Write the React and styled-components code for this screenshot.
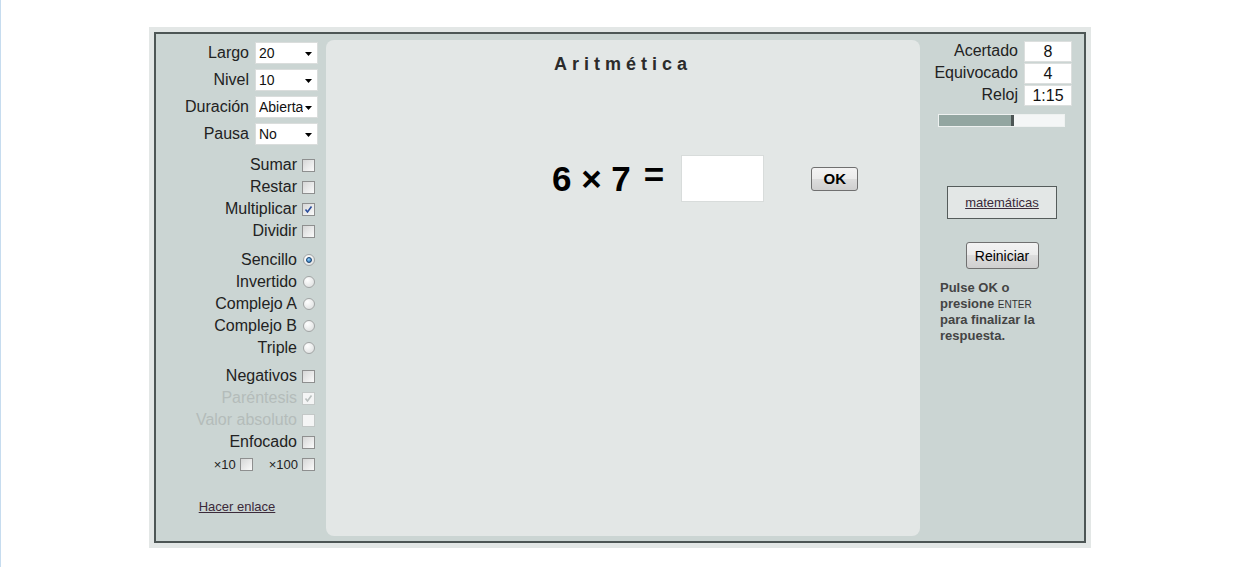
import React from "react";
import styled, { createGlobalStyle } from "styled-components";

const GlobalStyle = createGlobalStyle`
  body {
    margin: 0;
    background: #fff;
    font-family: "Liberation Sans", Arial, sans-serif;
  }
`;

const Page = styled.div`
  min-height: 567px;
  box-sizing: border-box;
  border-left: 1px solid #c6dcef;
  padding: 27px 0 0 148px;
`;

const Frame = styled.div`
  width: 942px;
  box-sizing: border-box;
  padding: 5px;
  background: #e3e7e6;
`;

const Board = styled.div`
  display: flex;
  height: 511px;
  box-sizing: border-box;
  border: 2px solid #4d5655;
  background: #cbd5d3;
`;

/* left column */

const LeftCol = styled.div`
  width: 170px;
  flex-shrink: 0;
  box-sizing: border-box;
  padding: 8px 8px 0 0;
  display: flex;
  flex-direction: column;
  align-items: flex-end;
`;

const SelectRow = styled.div`
  display: flex;
  align-items: center;
  gap: 6px;
  height: 22px;
  margin-bottom: ${(p) => (p.$last ? 0 : 5)}px;
  font-size: 16px;
  color: #222;
`;

const FakeSelect = styled.div`
  width: 63px;
  height: 22px;
  box-sizing: border-box;
  display: flex;
  align-items: center;
  background: #fff;
  border: 1px solid #dadddc;
  padding-left: 3px;
  font-size: 14px;
  color: #111;
`;

const SelectText = styled.span`
  flex: 1;
  overflow: hidden;
  white-space: nowrap;
`;

const Arrow = styled.svg`
  width: 7px;
  height: 4px;
  margin: 1px 5px 0 2px;
  flex-shrink: 0;
`;

const Group = styled.div`
  display: flex;
  flex-direction: column;
  align-items: flex-end;
  margin-top: ${(p) => p.$top}px;
  padding-right: 3px;
`;

const OptRow = styled.label`
  display: flex;
  align-items: center;
  gap: ${(p) => (p.$radio ? 6 : 5)}px;
  height: 22px;
  font-size: 16px;
  color: ${(p) => (p.$disabled ? "#b4bcba" : "#222")};
`;

const MultRow = styled.div`
  display: flex;
  align-items: center;
  height: 22px;
  gap: 16px;
`;

const SmallOpt = styled.span`
  display: flex;
  align-items: center;
  gap: 4px;
  font-size: 13px;
  color: #222;
`;

const Box = styled.span`
  width: 13px;
  height: 13px;
  box-sizing: border-box;
  display: inline-flex;
  align-items: center;
  justify-content: center;
  border: 1px solid ${(p) => (p.$disabled ? "#c3c8c7" : "#8e8f8f")};
  background: ${(p) =>
    p.$disabled ? "#f4f5f5" : "linear-gradient(135deg, #d6d7d7, #fafafa)"};
`;

const RadioRing = styled.span`
  width: 12px;
  height: 12px;
  box-sizing: border-box;
  border-radius: 50%;
  display: inline-flex;
  align-items: center;
  justify-content: center;
  border: 1px solid #a2a5a5;
  background: radial-gradient(circle at 35% 30%, #ffffff, #d9dbdb);
`;

const RadioDot = styled.span`
  width: 6px;
  height: 6px;
  border-radius: 50%;
  box-sizing: border-box;
  border: 1px solid #16406c;
  background: radial-gradient(circle at 40% 35%, #8fd0ff, #1f66a8);
`;

const LinkText = styled.a`
  font-size: 13px;
  color: #3b2a3a;
  text-decoration: underline;
  cursor: pointer;
`;

const BottomLink = styled.div`
  align-self: center;
  margin-top: 22px;
`;

/* center panel */

const Center = styled.div`
  width: 594px;
  flex-shrink: 0;
  margin: 6px 0 5px;
  border-radius: 8px;
  background: #e3e7e6;
  padding-top: 14px;
  box-sizing: border-box;
`;

const Title = styled.h1`
  margin: 0;
  text-align: center;
  font-size: 18px;
  font-weight: bold;
  letter-spacing: 5px;
  color: #2b2b2b;
  line-height: 21px;
`;

const Equation = styled.div`
  display: flex;
  align-items: center;
  margin-top: 80px;
  padding-left: 226px;
`;

const Expr = styled.span`
  font-size: 35px;
  font-weight: bold;
  color: #000;
  white-space: pre;
`;

const Equals = styled.span`
  font-size: 35px;
  font-weight: bold;
  color: #000;
  margin-left: 13px;
  position: relative;
  top: -4px;
`;

const AnswerBox = styled.div`
  width: 83px;
  height: 47px;
  box-sizing: border-box;
  margin-left: 17px;
  background: #fff;
  border: 1px solid #d8dcdb;
`;

const Button = styled.button`
  width: ${(p) => p.$w}px;
  height: ${(p) => p.$h}px;
  padding: 0;
  box-sizing: border-box;
  border: 1px solid #707070;
  border-radius: 3px;
  background: linear-gradient(#f3f3f3, #ebebeb 50%, #dddddd 50%, #cfcfcf);
  font-family: "Liberation Sans", Arial, sans-serif;
  font-size: ${(p) => (p.$bold ? 15 : 14)}px;
  font-weight: ${(p) => (p.$bold ? "bold" : "normal")};
  color: #000;
`;

const OkSlot = styled.div`
  margin-left: 47px;
  display: flex;
`;

/* right column */

const RightCol = styled.div`
  flex: 1;
  box-sizing: border-box;
  padding-top: 6px;
  display: flex;
  flex-direction: column;
`;

const StatRow = styled.div`
  display: flex;
  justify-content: flex-end;
  align-items: center;
  gap: 6px;
  height: 22px;
  padding-right: 12px;
  font-size: 16px;
  color: #222;
`;

const StatValue = styled.div`
  width: 48px;
  height: 21px;
  box-sizing: border-box;
  background: #fff;
  border: 1px solid #dcdfde;
  text-align: center;
  line-height: 19px;
  color: #111;
`;

const Progress = styled.div`
  width: 127px;
  height: 13px;
  box-sizing: border-box;
  margin: 8px 0 0 18px;
  border: 1px solid #eef1f0;
  background: #f4f6f6;
  display: flex;
`;

const ProgressFill = styled.div`
  height: 100%;
  box-sizing: border-box;
  background: #93a6a1;
  border-right: 3px solid #4d5655;
`;

const LinkBox = styled.div`
  align-self: center;
  margin-top: 59px;
  width: 110px;
  height: 33px;
  box-sizing: border-box;
  border: 1px solid #555c5b;
  background: #e3e7e6;
  display: flex;
  align-items: center;
  justify-content: center;
`;

const RestartSlot = styled.div`
  align-self: center;
  margin-top: 23px;
  display: flex;
`;

const Hint = styled.p`
  margin: 11px 0 0 20px;
  width: 115px;
  font-size: 13px;
  font-weight: bold;
  line-height: 16px;
  color: #444;
`;

const Key = styled.span`
  font-size: 10px;
  line-height: 1;
  font-weight: normal;
  color: #333;
`;

function Check({ checked, disabled }) {
  return (
    <Box $disabled={disabled}>
      {checked && (
        <svg width="9" height="9" viewBox="0 0 9 9">
          <path
            d="M1.5 4.5 L3.5 7 L7.5 1.5"
            fill="none"
            stroke={disabled ? "#b9bfbe" : "#2a4d9c"}
            strokeWidth="1.6"
          />
        </svg>
      )}
    </Box>
  );
}

function Radio({ checked }) {
  return <RadioRing>{checked && <RadioDot />}</RadioRing>;
}

const selects = [
  ["Largo", "20"],
  ["Nivel", "10"],
  ["Duración", "Abierta"],
  ["Pausa", "No"],
];

const operations = [
  ["Sumar", false],
  ["Restar", false],
  ["Multiplicar", true],
  ["Dividir", false],
];

const modes = ["Sencillo", "Invertido", "Complejo A", "Complejo B", "Triple"];

const extras = [
  ["Negativos", false, false],
  ["Paréntesis", true, true],
  ["Valor absoluto", false, true],
  ["Enfocado", false, false],
];

const stats = [
  ["Acertado", "8"],
  ["Equivocado", "4"],
  ["Reloj", "1:15"],
];

export default function App() {
  const elapsed = 75;
  const total = 125;

  return (
    <>
      <GlobalStyle />
      <Page>
        <Frame>
          <Board>
            <LeftCol>
              {selects.map(([label, value], i) => (
                <SelectRow key={label} $last={i === selects.length - 1}>
                  <span>{label}</span>
                  <FakeSelect>
                    <SelectText>{value}</SelectText>
                    <Arrow viewBox="0 0 7 4">
                      <polygon points="0,0 7,0 3.5,4" fill="#000" />
                    </Arrow>
                  </FakeSelect>
                </SelectRow>
              ))}

              <Group $top={9}>
                {operations.map(([label, on]) => (
                  <OptRow key={label}>
                    {label}
                    <Check checked={on} />
                  </OptRow>
                ))}
              </Group>

              <Group $top={7}>
                {modes.map((label, i) => (
                  <OptRow key={label} $radio>
                    {label}
                    <Radio checked={i === 0} />
                  </OptRow>
                ))}
              </Group>

              <Group $top={6}>
                {extras.map(([label, on, off]) => (
                  <OptRow key={label} $disabled={off}>
                    {label}
                    <Check checked={on} disabled={off} />
                  </OptRow>
                ))}
                <MultRow>
                  <SmallOpt>
                    ×10
                    <Check />
                  </SmallOpt>
                  <SmallOpt>
                    ×100
                    <Check />
                  </SmallOpt>
                </MultRow>
              </Group>

              <BottomLink>
                <LinkText>Hacer enlace</LinkText>
              </BottomLink>
            </LeftCol>

            <Center>
              <Title>Aritmética</Title>
              <Equation>
                <Expr>6 × 7</Expr>
                <Equals>=</Equals>
                <AnswerBox />
                <OkSlot>
                  <Button $w={47} $h={24} $bold>
                    OK
                  </Button>
                </OkSlot>
              </Equation>
            </Center>

            <RightCol>
              {stats.map(([label, value]) => (
                <StatRow key={label}>
                  <span>{label}</span>
                  <StatValue>{value}</StatValue>
                </StatRow>
              ))}
              <Progress>
                <ProgressFill style={{ width: `${(elapsed / total) * 100}%` }} />
              </Progress>
              <LinkBox>
                <LinkText>matemáticas</LinkText>
              </LinkBox>
              <RestartSlot>
                <Button $w={73} $h={27}>
                  Reiniciar
                </Button>
              </RestartSlot>
              <Hint>
                Pulse OK o presione <Key>ENTER</Key> para finalizar la respuesta.
              </Hint>
            </RightCol>
          </Board>
        </Frame>
      </Page>
    </>
  );
}
